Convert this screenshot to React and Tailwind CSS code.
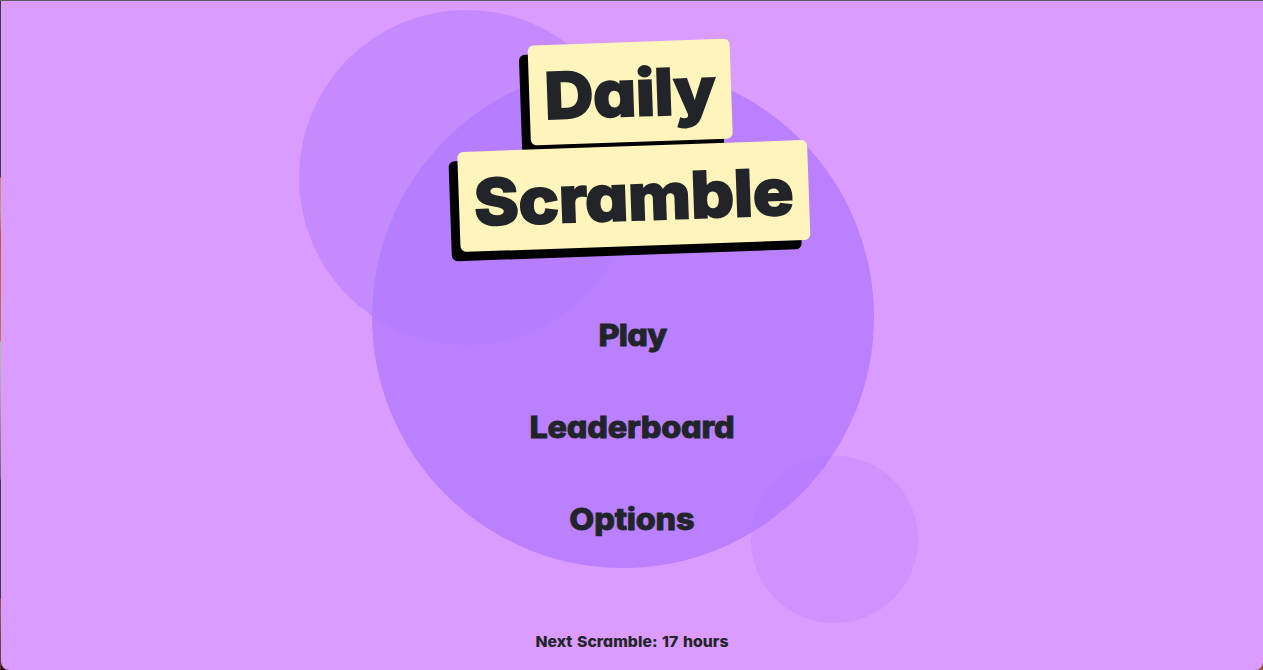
const menu = [
  { label: "Play", style: "tracking-[-0.7px]" },
  { label: "Leaderboard", style: "tracking-[-0.2px]" },
  { label: "Options", style: "tracking-[-0.2px]" },
];

const tile =
  "flex h-[100px] items-center justify-center rounded-md bg-[#fff4bb] pt-px shadow-[-9px_9px_0_#000]";

const heading = "inline-block scale-x-[1.06] text-[64px] leading-none [-webkit-text-stroke:2px_#212529]";

export default function App() {
  return (
    <div className="flex h-[670px] w-full overflow-hidden border-t border-[#5e5a60] bg-[linear-gradient(to_right,#2a0a12_50%,#9a5530_50%)] font-['Inter','Liberation_Sans',sans-serif] text-[#212529] [font-feature-settings:'cv11'] [font-weight:800]">
      <div className="w-px shrink-0 bg-[linear-gradient(to_bottom,#3f3b45_0,#3f3b45_176px,#d08070_177px,#c58f80_205px,#b9a0a0_206px,#c05a30_235px,#c07840_340px,#a9c0a8_341px,#b0a8b0_385px,#76607c_478px,#3b3b42_479px,#3b3b42_597px,#904a40_598px,#806068_610px,#5b3038_669px)]" />
      <main className="relative isolate flex min-w-0 flex-1 flex-col items-center overflow-hidden rounded-b-lg bg-[#db9bff]">
        <div className="absolute top-[65px] left-[370.5px] -z-10 size-[502px] rounded-full bg-[#b279ff]/80" />
        <div className="absolute top-[9px] left-[297.5px] -z-10 size-[335px] rounded-full bg-[#b279ff]/50" />
        <div className="absolute top-[455px] left-[750px] -z-10 size-[167px] rounded-full bg-[#b279ff]/25" />

        <h1 className="mt-[41px] mr-px flex -rotate-2 flex-col items-center gap-1">
          <span className={`${tile} w-[202px]`}>
            <span className={`${heading} tracking-[-0.5px]`}>Daily</span>
          </span>
          <span className={`${tile} w-[350px]`}>
            <span className={`${heading} tracking-[-0.2px]`}>Scramble</span>
          </span>
        </h1>

        <nav className="mt-[65px] flex flex-col items-center gap-[44px] [-webkit-text-stroke:0.8px_#212529]">
          {menu.map(({ label, style }) => (
            <button key={label} className={`h-12 scale-x-[1.08] text-[30px] leading-[48px] ${style}`}>
              {label}
            </button>
          ))}
        </nav>

        <p className="mt-[87px] scale-x-[1.05] text-[15px] leading-6 tracking-[0.05px] [word-spacing:1px]">
          Next Scramble: 17 hours
        </p>
      </main>
    </div>
  );
}
